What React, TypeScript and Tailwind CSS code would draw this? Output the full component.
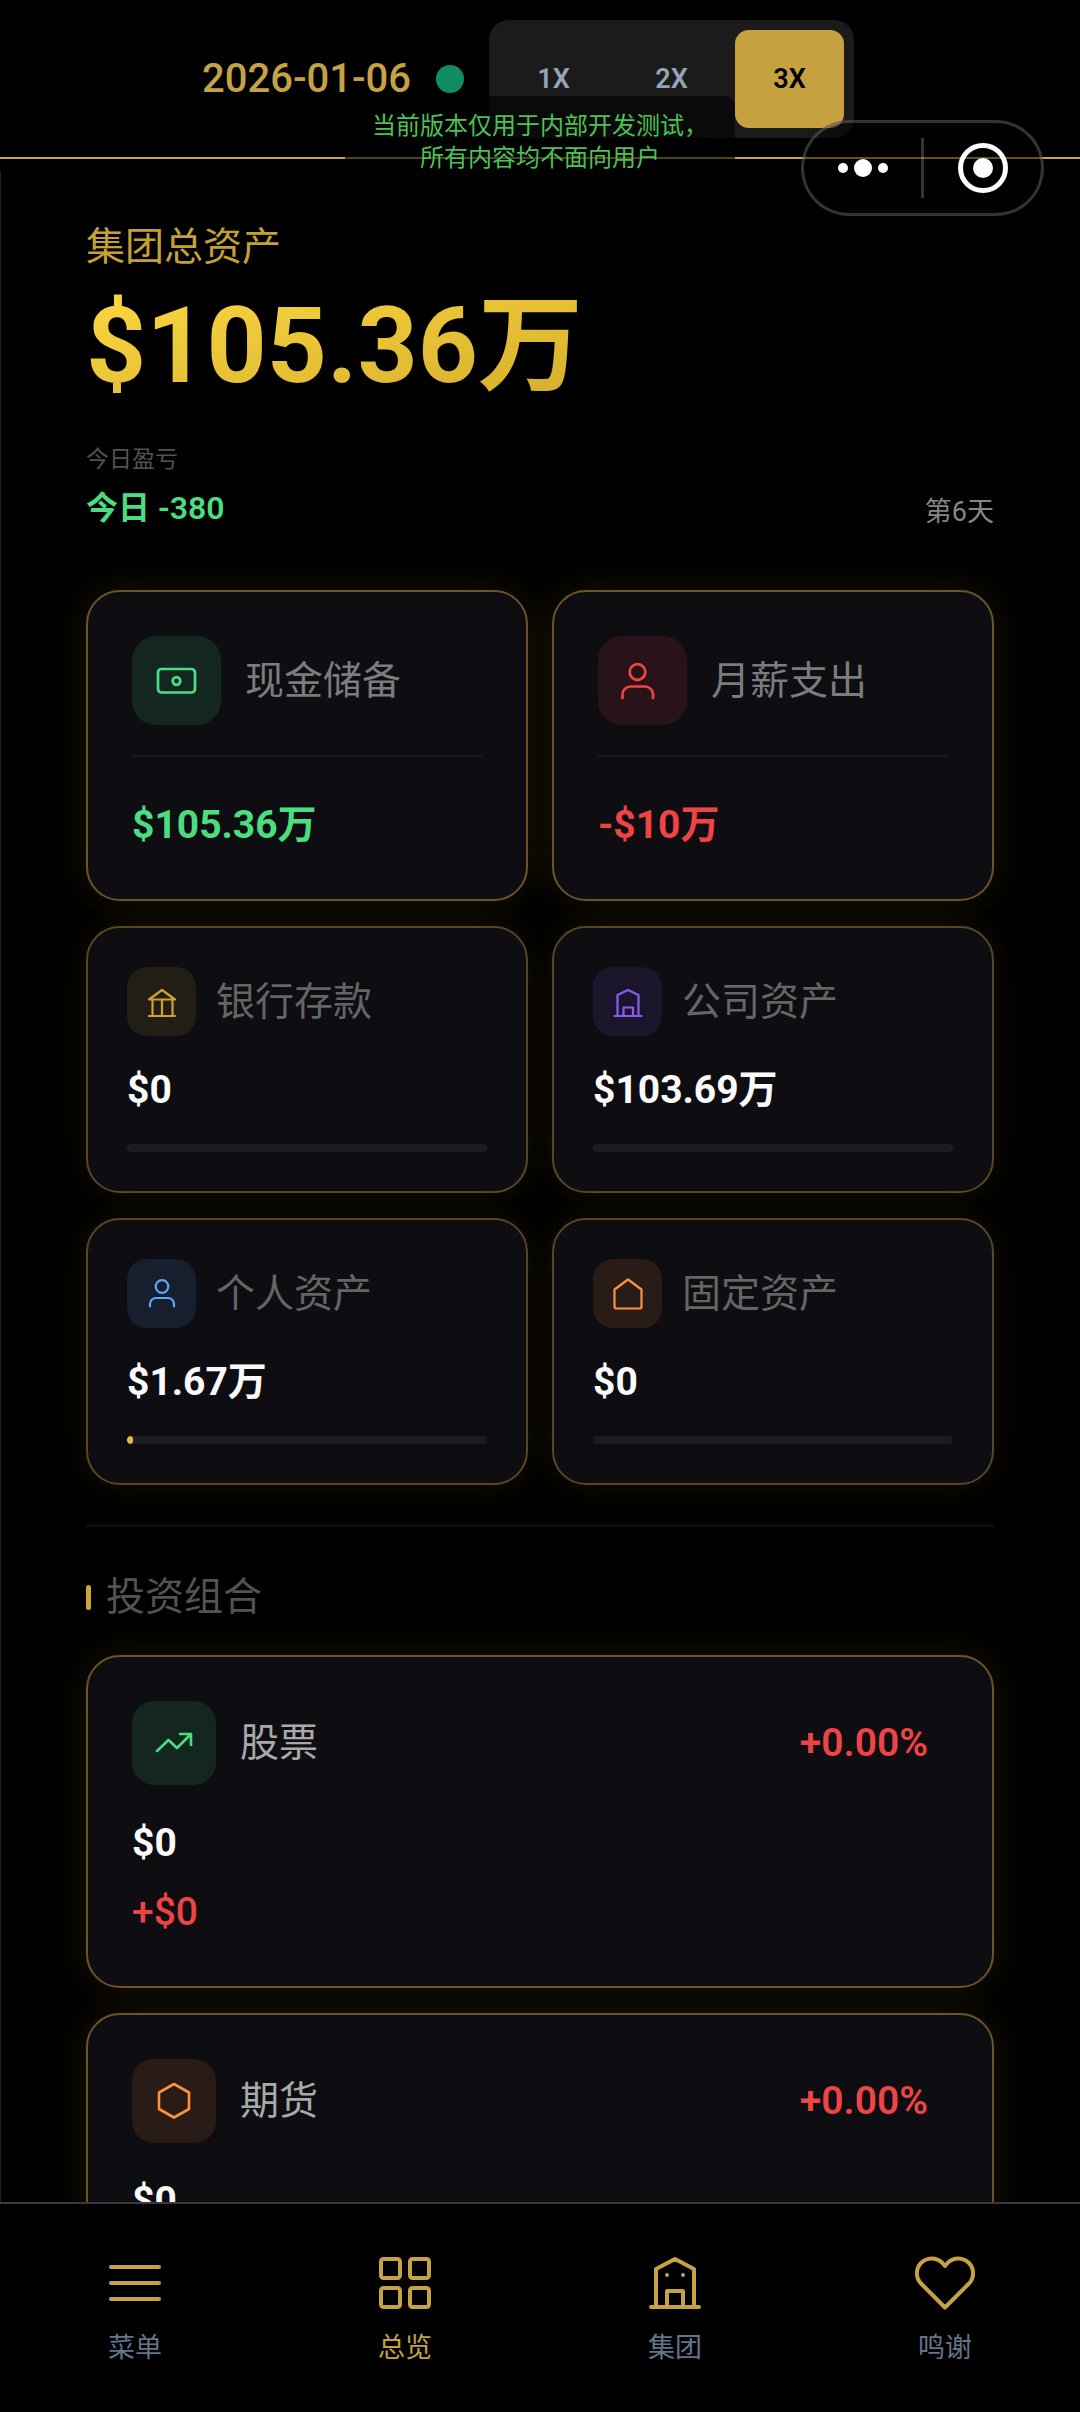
import { useState, type ReactNode } from "react";

const stroke = {
  fill: "none",
  stroke: "currentColor",
  strokeLinecap: "round" as const,
  strokeLinejoin: "round" as const,
};

const CashIcon = () => (
  <svg className="size-12" viewBox="0 0 48 48" strokeWidth="2.7" {...stroke}>
    <rect x="5" y="12" width="37" height="23.5" rx="3.5" />
    <circle cx="23.5" cy="24" r="3.8" />
  </svg>
);

const SalaryIcon = () => (
  <svg className="size-12" viewBox="0 0 48 48" strokeWidth="2.7" {...stroke}>
    <circle cx="18.5" cy="15" r="7.8" />
    <path d="M3.5 41v-3.500a8 8 0 0 1 8-8h14.500a8 8 0 0 1 8 8V41" />
  </svg>
);

const BankIcon = () => (
  <svg className="size-9" viewBox="0 0 36 36" strokeWidth="2.2" {...stroke}>
    <path d="M5 15.500 18 6l13 9.500zM8.500 16v15.500M18 16v15.500M28.500 16v15.500M5 32h26" />
  </svg>
);

const CompanyIcon = () => (
  <svg className="size-9" viewBox="0 0 36 36" strokeWidth="2.2" {...stroke}>
    <path d="M7.500 32V11L18 6l10.500 5v21M4.500 32h27M13.500 32v-8.500h9.500V32" />
  </svg>
);

const PersonIcon = () => (
  <svg className="size-9" viewBox="0 0 36 36" strokeWidth="2.2" {...stroke}>
    <circle cx="18" cy="10.500" r="6.300" />
    <path d="M6 30.500v-2.500a6 6 0 0 1 6-6h12a6 6 0 0 1 6 6v2.500" />
  </svg>
);

const HouseIcon = () => (
  <svg className="size-9" viewBox="0 0 36 36" strokeWidth="2.2" {...stroke}>
    <path d="M18 3.500 31.500 13.500V30.500a2 2 0 0 1-2 2h-23a2 2 0 0 1-2-2V13.500z" />
  </svg>
);

const TrendIcon = () => (
  <svg className="size-12" viewBox="0 0 48 48" strokeWidth="2.6" {...stroke}>
    <path d="M7 32 18.500 21l8.500 8 14-14M30 15h11v11" />
  </svg>
);

const HexagonIcon = () => (
  <svg className="size-12" viewBox="0 0 48 48" strokeWidth="2.6" {...stroke}>
    <path d="M24 7l15 8.500V32l-15 8.500L9 32V15.500z" />
  </svg>
);

const MenuIcon = () => (
  <svg className="size-[60px]" viewBox="0 0 60 60" strokeWidth="4" {...stroke}>
    <path d="M6 14h48M6 30h48M6 46h48" />
  </svg>
);

const GridIcon = () => (
  <svg className="size-[60px]" viewBox="0 0 60 60" strokeWidth="4" {...stroke}>
    <rect x="6" y="6" width="19" height="19" rx="2.5" />
    <rect x="35" y="6" width="19" height="19" rx="2.5" />
    <rect x="6" y="35" width="19" height="19" rx="2.5" />
    <rect x="35" y="35" width="19" height="19" rx="2.5" />
  </svg>
);

const GroupIcon = () => (
  <svg className="size-[60px]" viewBox="0 0 60 60" strokeWidth="4" {...stroke}>
    <path d="M11 54V16L30 6l19 10v38M6 54h48M22 54V38h16v16M22 22h.01M38 22h.01" />
  </svg>
);

const HeartIcon = () => (
  <svg className="size-[60px]" viewBox="0 0 60 60" strokeWidth="4" {...stroke}>
    <path d="M30 54.500 6.500 31A14.800 14.800 0 0 1 27 9.500l3 3.500 3-3.500A14.800 14.800 0 0 1 53.500 31z" />
  </svg>
);

type Asset = {
  label: string;
  value: string;
  percent: number;
  tint: string;
  icon: ReactNode;
};

const assets: Asset[] = [
  { label: "银行存款", value: "$0", percent: 0, tint: "bg-[#231e15] text-[#d0a232]", icon: <BankIcon /> },
  { label: "公司资产", value: "$103.69万", percent: 0, tint: "bg-[#1c162c] text-[#8b5cf6]", icon: <CompanyIcon /> },
  { label: "个人资产", value: "$1.67万", percent: 1.6, tint: "bg-[#171e2d] text-[#60a5fa]", icon: <PersonIcon /> },
  { label: "固定资产", value: "$0", percent: 0, tint: "bg-[#291c17] text-[#fb923c]", icon: <HouseIcon /> },
];

const portfolio = [
  { label: "股票", value: "$0", change: "+$0", rate: "+0.00%", tint: "bg-[#142620] text-[#4ade80]", icon: <TrendIcon /> },
  { label: "期货", value: "$0", change: "+$0", rate: "+0.00%", tint: "bg-[#291c17] text-[#fb923c]", icon: <HexagonIcon /> },
];

const tabs = [
  { label: "菜单", icon: <MenuIcon /> },
  { label: "总览", icon: <GridIcon /> },
  { label: "集团", icon: <GroupIcon /> },
  { label: "鸣谢", icon: <HeartIcon /> },
];

const speeds = ["1X", "2X", "3X"];

function SummaryCard({ label, value, tint, valueColor, icon }: { label: string; value: string; tint: string; valueColor: string; icon: ReactNode }) {
  return (
    <article className="rounded-[34px] border-2 border-[#6b5426] bg-[#0e0d12] p-11 shadow-[0_0_40px_rgba(212,168,20,0.12)]">
      <div className="flex items-center gap-6 border-b-2 border-[#1b1a19] pb-[30px]">
        <div className={`flex size-[89px] shrink-0 items-center justify-center rounded-3xl ${tint}`}>{icon}</div>
        <h2 className="text-[39px] leading-[60px] text-[#7c7c7c]">{label}</h2>
      </div>
      <p className={`mt-[38px] text-[39px] leading-[60px] font-bold ${valueColor}`}>{value}</p>
    </article>
  );
}

function AssetCard({ label, value, percent, tint, icon }: Asset) {
  return (
    <article className="rounded-[34px] border-2 border-[#574722] bg-[#0e0d12] p-[39px] shadow-[0_0_32px_rgba(212,168,20,0.1)]">
      <div className="flex items-center gap-5">
        <div className={`flex size-[69px] shrink-0 items-center justify-center rounded-[20px] ${tint}`}>{icon}</div>
        <h2 className="text-[39px] leading-[60px] text-[#656565]">{label}</h2>
      </div>
      <p className="mt-6 text-[39px] leading-[60px] font-bold text-[#fafafa]">{value}</p>
      <div className="mt-6 h-2 overflow-hidden rounded-full bg-[#1c1b20]">
        <div className="h-full rounded-full bg-[#e3bc3c]" style={{ width: `${percent}%` }} />
      </div>
    </article>
  );
}

export default function App() {
  const [speed, setSpeed] = useState("3X");
  const [tab, setTab] = useState("总览");

  return (
    <div className="relative flex h-screen flex-col bg-black font-[Roboto,'Noto_Sans_CJK_SC',sans-serif]">
      {/* Header */}
      <header className="flex items-center justify-center gap-[25px] border-b-2 border-[#c3a256] pt-5 pr-6 pb-[19px]">
        <time dateTime="2026-01-06" className="text-[40px] leading-[60px] font-medium text-[#c5a243]">
          2026-01-06
        </time>
        <span className="size-7 rounded-full bg-[#0f8c60]" />
        <div className="flex gap-[9px] rounded-[20px] bg-[#1b1b1b] p-[10px]">
          {speeds.map((item) => (
            <button
              key={item}
              type="button"
              onClick={() => setSpeed(item)}
              className={`h-[98px] w-[109px] rounded-[14px] text-[27px] font-semibold ${
                item === speed ? "bg-[#c5a23f] text-black" : "text-[#94a3b8]"
              }`}
            >
              {item}
            </button>
          ))}
        </div>
      </header>

      {/* Dev build notice */}
      <p className="pointer-events-none absolute top-24 left-1/2 w-[390px] -translate-x-1/2 rounded-[10px] bg-black/60 py-[14px] text-center text-[24px] leading-8 text-[#4ac355]">
        当前版本仅用于内部开发测试，
        <br />
        所有内容均不面向用户
      </p>

      {/* Mini program capsule */}
      <div className="absolute top-[120px] right-9 flex h-24 w-[243px] items-center rounded-full border-3 border-white/20 bg-black/50 text-white">
        <button type="button" aria-label="更多" className="flex h-full flex-1 items-center justify-center gap-[6px]">
          <span className="size-[10px] rounded-full bg-white" />
          <span className="size-[18px] rounded-full bg-white" />
          <span className="size-[10px] rounded-full bg-white" />
        </button>
        <span className="h-[60px] w-[3px] bg-white/20" />
        <button type="button" aria-label="关闭" className="flex h-full flex-1 items-center justify-center">
          <span className="flex size-[50px] items-center justify-center rounded-full border-5 border-white">
            <span className="size-5 rounded-full bg-white" />
          </span>
        </button>
      </div>

      <main className="mt-3 min-h-0 flex-1 overflow-y-auto border-l border-[#24211a] pt-[50px] pr-[86px] pl-[85px] [scrollbar-width:none]">
        {/* Total */}
        <h1 className="text-[39px] leading-[52px] text-[#c5a034]">集团总资产</h1>
        <p className="mt-[14px] w-fit bg-gradient-to-br from-[#fcd840] to-[#d4ad2c] bg-clip-text text-[105px] leading-[120px] font-bold text-transparent">
          $105.36万
        </p>
        <div className="mt-[37px] flex items-end justify-between">
          <div>
            <p className="text-[23px] leading-8 text-[#525252]">今日盈亏</p>
            <p className="mt-[10px] text-[32px] leading-[44px] font-semibold text-[#4ade80]">今日 -380</p>
          </div>
          <span className="text-[27px] leading-9 text-[#868686]">第6天</span>
        </div>

        <section className="mt-[60px] grid grid-cols-2 gap-x-6 gap-y-[25px]">
          <SummaryCard label="现金储备" value="$105.36万" tint="bg-[#142620] text-[#4ade80]" valueColor="text-[#4ade80]" icon={<CashIcon />} />
          <SummaryCard label="月薪支出" value="-$10万" tint="bg-[#281318] text-[#ef4444]" valueColor="text-[#ef4444]" icon={<SalaryIcon />} />
          {assets.map((asset) => (
            <AssetCard key={asset.label} {...asset} />
          ))}
        </section>

        {/* Portfolio */}
        <section className="mt-[39px] border-t-3 border-[#0c0c0c] pt-10 pb-12">
          <div className="flex items-center gap-[15px]">
            <span className="h-[25px] w-[5px] rounded-full bg-[#d0a632]" />
            <h2 className="text-[39px] leading-[60px] text-[#535353]">投资组合</h2>
          </div>
          <div className="mt-7 flex flex-col gap-[25px]">
            {portfolio.map((item) => (
              <article
                key={item.label}
                className="rounded-[34px] border-2 border-[#6b5426] bg-[#0e0d12] p-11 shadow-[0_0_40px_rgba(212,168,20,0.12)]"
              >
                <div className="flex items-center gap-6">
                  <div className={`flex size-[84px] items-center justify-center rounded-[22px] ${item.tint}`}>{item.icon}</div>
                  <h3 className="text-[39px] leading-[60px] text-[#a9a9a9]">{item.label}</h3>
                  <span className="ml-auto pr-5 text-[39px] leading-[60px] font-semibold text-[#ef4444]">{item.rate}</span>
                </div>
                <p className="mt-7 text-[39px] leading-[60px] font-bold text-[#fafafa]">{item.value}</p>
                <p className="mt-[9px] text-[39px] leading-[60px] font-medium text-[#ef4444]">{item.change}</p>
              </article>
            ))}
          </div>
        </section>
      </main>

      {/* Bottom tabs */}
      <nav className="grid grid-cols-4 border-t-2 border-[#3a3a3c] bg-black pt-[49px] pb-[46px]">
        {tabs.map((item) => (
          <button
            key={item.label}
            type="button"
            onClick={() => setTab(item.label)}
            className="flex flex-col items-center gap-[17px] text-[#c5a243]"
          >
            {item.icon}
            <span className={`text-[27px] leading-9 ${item.label === tab ? "text-[#c5a243]" : "text-[#64748b]"}`}>
              {item.label}
            </span>
          </button>
        ))}
      </nav>
    </div>
  );
}
